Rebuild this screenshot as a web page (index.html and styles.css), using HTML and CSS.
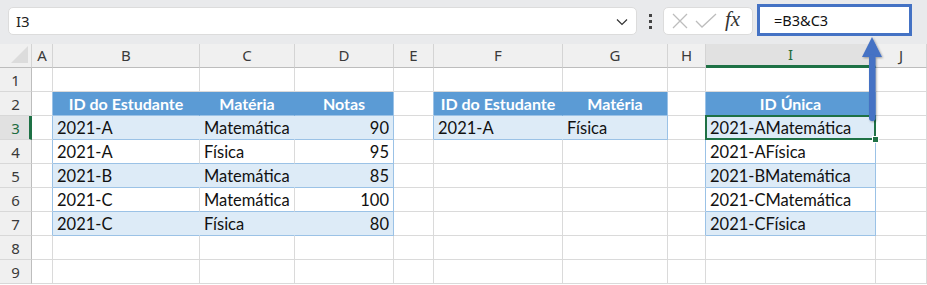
FILE: index.html
```html
<!DOCTYPE html>
<html>
<head>
  <meta charset="UTF-8">
  <title>ID Única</title>
  <link rel="stylesheet" href="styles.css">
</head>
<body>
  <div class="toolbar">
    <div class="namebox">
      <span>I3</span>
      <svg class="chev" width="12" height="8" viewBox="0 0 12 8"><path d="M1 1.5 L6 6.5 L11 1.5" fill="none" stroke="#333" stroke-width="1.2"/></svg>
    </div>
    <div class="dots"><i></i><i></i><i></i></div>
    <div class="fxbox">
      <svg width="18" height="18" viewBox="0 0 18 18"><path d="M2 2 L16 16 M16 2 L2 16" stroke="#bdbdbd" stroke-width="1.3"/></svg>
      <svg width="22" height="18" viewBox="0 0 22 18"><path d="M1 9 L7 15 L21 2" fill="none" stroke="#bdbdbd" stroke-width="1.3"/></svg>
      <span class="fx">fx</span>
    </div>
    <div class="formula">=B3&amp;C3</div>
  </div>

  <div class="sheet">
    <!-- column headers -->
    <div class="corner"><svg width="22" height="18" viewBox="0 0 22 18"><path d="M21 0 L21 17 L4 17 Z" fill="#dcdcdc"/></svg></div>
    <div class="ch">A</div><div class="ch">B</div><div class="ch">C</div><div class="ch">D</div><div class="ch">E</div>
    <div class="ch">F</div><div class="ch">G</div><div class="ch">H</div><div class="ch sel">I</div><div class="ch">J</div>

    <!-- row 1 -->
    <div class="rh">1</div>
    <div class="c"></div><div class="c"></div><div class="c"></div><div class="c"></div><div class="c"></div>
    <div class="c"></div><div class="c"></div><div class="c"></div><div class="c"></div><div class="c"></div>

    <!-- row 2 -->
    <div class="rh">2</div>
    <div class="c lb"></div><div class="c hd">ID do Estudante</div><div class="c hd">Matéria</div><div class="c hd end">Notas</div>
    <div class="c lb"></div><div class="c hd">ID do Estudante</div><div class="c hd end">Matéria</div>
    <div class="c lb"></div><div class="c hd end">ID Única</div><div class="c"></div>

    <!-- row 3 -->
    <div class="rh sel">3</div>
    <div class="c lb"></div><div class="c bd">2021-A</div><div class="c bd">Matemática</div><div class="c bd end num">90</div>
    <div class="c lb"></div><div class="c bd tb">2021-A</div><div class="c bd end tb">Física</div>
    <div class="c lb"></div><div class="c bd end active">2021-AMatemática</div><div class="c"></div>

    <!-- row 4 -->
    <div class="rh">4</div>
    <div class="c lb"></div><div class="c wt">2021-A</div><div class="c wt">Física</div><div class="c wt end num">95</div>
    <div class="c"></div><div class="c"></div><div class="c"></div>
    <div class="c lb"></div><div class="c wt end">2021-AFísica</div><div class="c"></div>

    <!-- row 5 -->
    <div class="rh">5</div>
    <div class="c lb"></div><div class="c bd">2021-B</div><div class="c bd">Matemática</div><div class="c bd end num">85</div>
    <div class="c"></div><div class="c"></div><div class="c"></div>
    <div class="c lb"></div><div class="c bd end">2021-BMatemática</div><div class="c"></div>

    <!-- row 6 -->
    <div class="rh">6</div>
    <div class="c lb"></div><div class="c wt">2021-C</div><div class="c wt">Matemática</div><div class="c wt end num">100</div>
    <div class="c"></div><div class="c"></div><div class="c"></div>
    <div class="c lb"></div><div class="c wt end">2021-CMatemática</div><div class="c"></div>

    <!-- row 7 -->
    <div class="rh">7</div>
    <div class="c lb"></div><div class="c bd tb">2021-C</div><div class="c bd tb">Física</div><div class="c bd end num tb">80</div>
    <div class="c"></div><div class="c"></div><div class="c"></div>
    <div class="c lb"></div><div class="c bd end tb">2021-CFísica</div><div class="c"></div>

    <!-- row 8 -->
    <div class="rh">8</div>
    <div class="c"></div><div class="c"></div><div class="c"></div><div class="c"></div><div class="c"></div>
    <div class="c"></div><div class="c"></div><div class="c"></div><div class="c"></div><div class="c"></div>

    <!-- row 9 -->
    <div class="rh">9</div>
    <div class="c"></div><div class="c"></div><div class="c"></div><div class="c"></div><div class="c"></div>
    <div class="c"></div><div class="c"></div><div class="c"></div><div class="c"></div><div class="c"></div>
  </div>

  <!-- annotation arrow pointing at the formula -->
  <svg class="arrow" width="34" height="96" viewBox="0 0 34 96">
    <defs>
      <filter id="sh" x="-50%" y="-20%" width="200%" height="140%">
        <feDropShadow dx="1" dy="1" stdDeviation="1.2" flood-color="#000" flood-opacity="0.35"/>
      </filter>
    </defs>
    <g filter="url(#sh)" fill="#4472c4">
      <path d="M15 3 L25 23 L5 23 Z"/>
      <rect x="12" y="20" width="6.5" height="67" rx="3"/>
    </g>
  </svg>
</body>
</html>
```

FILE: styles.css
```css
body {
  margin: 0;
  width: 927px;
  height: 285px;
  overflow: hidden;
  background: #fff;
  font-family: Lato, "Liberation Sans", sans-serif;
  position: relative;
}

.toolbar {
  height: 44px;
  background: #e9eaec;
  display: flex;
  align-items: flex-start;
  box-sizing: border-box;
  padding-top: 7px;
}
.namebox {
  margin-left: 8px;
  width: 629px;
  height: 28px;
  background: #fff;
  border-radius: 5px;
  border: 1px solid #dcdcdc;
  box-sizing: border-box;
  display: flex;
  align-items: center;
  justify-content: space-between;
  padding: 0 8px 0 7px;
  font-family: "Noto Sans", "Open Sans", sans-serif;
  font-size: 15px;
  color: #222;
}
.chev {
  margin-top: 2px;
}
.dots {
  width: 26px;
  height: 28px;
  display: flex;
  flex-direction: column;
  align-items: center;
  justify-content: center;
  gap: 3px;
}
.dots i {
  display: block;
  width: 3px;
  height: 3px;
  background: #444;
}
.fxbox {
  width: 90px;
  height: 28px;
  background: #fff;
  border-radius: 5px;
  border: 1px solid #dcdcdc;
  box-sizing: border-box;
  display: flex;
  align-items: center;
  padding-left: 7px;
  gap: 6px;
}
.fx {
  font-family: "Liberation Serif", serif;
  font-style: italic;
  font-size: 21px;
  color: #333;
  margin-left: 2px;
  margin-top: -3px;
}
.formula {
  margin-left: 4px;
  margin-top: -3px;
  width: 155px;
  height: 32px;
  border: 3px solid #4472c4;
  background: #fff;
  box-sizing: border-box;
  padding-left: 14px;
  line-height: 26px;
  font-family: "Noto Sans", "Open Sans", sans-serif;
  font-size: 14.5px;
  color: #111;
}

.sheet {
  display: grid;
  grid-template-columns: 32px 21px 147px 95px 99px 40px 129px 105px 38px 170px 51px;
  grid-template-rows: 24px repeat(9, 24px);
}
.corner, .ch, .rh {
  background: #f0f0f0;
  color: #3a3a3a;
  font-family: "Noto Sans", "Open Sans", sans-serif;
  font-size: 15px;
  box-sizing: border-box;
}
.corner {
  border-right: 1px solid #d4d4d4;
  border-bottom: 1px solid #bdbdbd;
  display: flex;
  align-items: flex-end;
  justify-content: flex-end;
  padding: 0 2px 3px 0;
}
.ch {
  border-right: 1px solid #d4d4d4;
  border-bottom: 1px solid #bdbdbd;
  text-align: center;
  line-height: 23px;
}
.ch.sel {
  background: #e1e1e1;
  color: #1e6b3e;
  border-bottom: 3px solid #1e7145;
  line-height: 21px;
}
.rh {
  border-right: 1px solid #bdbdbd;
  border-bottom: 1px solid #d8d8d8;
  text-align: center;
  line-height: 24px;
}
.rh.sel {
  background: #e1e1e1;
  color: #1e6b3e;
  border-right: 3px solid #1e7145;
  padding-left: 2px;
}

.c {
  box-sizing: border-box;
  border-right: 1px solid #dadada;
  border-bottom: 1px solid #dadada;
  font-size: 16.5px;
  line-height: 24px;
  padding: 0 4px;
  white-space: nowrap;
  color: #111;
}
.c.lb {
  border-right-color: #9bc2e6;
}
.c.hd {
  background: #5b9bd5;
  border-right-color: #5b9bd5;
  border-bottom-color: #9bc2e6;
  color: #fff;
  font-weight: bold;
  font-size: 16px;
  text-align: center;
}
.c.bd {
  background: #ddebf7;
  border-right-color: #ddebf7;
  border-bottom-color: #9bc2e6;
}
.c.wt {
  border-bottom-color: #9bc2e6;
}
.c.tb {
  border-bottom-color: #9bc2e6;
}
.c.end {
  border-right-color: #9bc2e6;
}
.c.num {
  text-align: right;
}
.c.active {
  position: relative;
}
.c.active::after {
  content: "";
  position: absolute;
  left: -1px;
  top: -1px;
  right: -1px;
  bottom: -1px;
  border: 2px solid #1e7145;
}
.c.active::before {
  content: "";
  position: absolute;
  right: -4px;
  bottom: -4px;
  width: 5px;
  height: 5px;
  background: #1e7145;
  border: 1px solid #fff;
  z-index: 1;
}

.arrow {
  position: absolute;
  left: 857px;
  top: 34px;
}
```
